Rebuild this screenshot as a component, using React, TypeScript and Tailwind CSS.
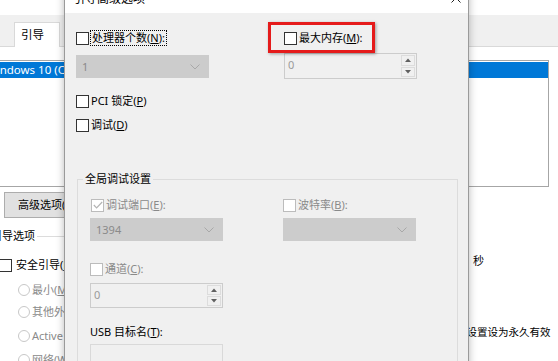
import React from "react";

function U({ children }: { children: React.ReactNode }) {
  return <span className="underline underline-offset-[1px]">{children}</span>;
}

function CheckBox({ checked = false, disabled = false }: { checked?: boolean; disabled?: boolean }) {
  return (
    <span
      className={
        disabled
          ? "inline-flex h-[13px] w-[13px] shrink-0 items-center justify-center border border-[#bcbcbc] bg-white"
          : "inline-flex h-[13px] w-[13px] shrink-0 items-center justify-center border border-[#333333] bg-white"
      }
    >
      {checked && (
        <svg width="10" height="8" viewBox="0 0 10 8">
          <path d="M0.8 4 L3.6 6.8 L9.2 1" fill="none" stroke={disabled ? "#b4b4b4" : "#222"} strokeWidth="1.2" />
        </svg>
      )}
    </span>
  );
}

function Radio() {
  return <span className="inline-block h-[12px] w-[12px] shrink-0 rounded-full border border-[#c8c8c8] bg-white" />;
}

function Chevron() {
  return (
    <svg width="10" height="6" viewBox="0 0 10 6">
      <path d="M0.5 0.5 L5 5 L9.5 0.5" fill="none" stroke="#a8a8a8" strokeWidth="1" />
    </svg>
  );
}

function Combo({ value }: { value: string }) {
  return (
    <div className="flex h-[23px] w-[133px] items-center justify-between border border-[#cccccc] bg-[#cccccc] pl-[5px] pr-[8px] text-[#8a8a8a]">
      <span>{value}</span>
      <Chevron />
    </div>
  );
}

function Spin({ h26 = false }: { h26?: boolean }) {
  return (
    <div
      className={
        h26
          ? "flex h-[26px] w-[133px] border border-[#cccccc] bg-[#f0f0f0]"
          : "flex h-[25px] w-[133px] border border-[#cccccc] bg-[#f0f0f0]"
      }
    >
      <span className="flex-1 pl-[3px] pt-[3px] text-[#9a9a9a]">0</span>
      <div className="flex w-[16px] flex-col gap-[1px] p-[1px]">
        <div className="flex flex-1 items-center justify-center border border-[#dcdcdc] bg-[#f0f0f0]">
          <svg width="6" height="4" viewBox="0 0 6 4">
            <path d="M0 4 L3 0.5 L6 4 Z" fill="#606060" />
          </svg>
        </div>
        <div className="flex flex-1 items-center justify-center border border-[#dcdcdc] bg-[#f0f0f0]">
          <svg width="6" height="4" viewBox="0 0 6 4">
            <path d="M0 0 L3 3.5 L6 0 Z" fill="#606060" />
          </svg>
        </div>
      </div>
    </div>
  );
}

function BackgroundWindow() {
  return (
    <div className="absolute left-[-20px] top-0 w-[620px] bg-white">
      <div className="h-[15px] bg-white" />
      <div className="flex h-[32px] items-end border-b border-[#d9d9d9] bg-[#f0f0f0] pl-[34px]">
        <div className="-mb-px flex h-[25px] w-[46px] items-center border border-b-0 border-[#d9d9d9] bg-white pl-[6px] text-[11.5px]">
          引导
        </div>
      </div>
      <div className="pl-[3px] pt-[13px]">
        <div className="h-[127px] w-[566px] border border-[#a6a6a6] pt-px">
          <div className="flex h-[16px] items-center bg-[#0078d7] pl-[2px] text-[11.5px] text-white whitespace-nowrap font-['Noto_Sans','Noto_Sans_CJK_SC',sans-serif]">
            Windows 10 (C:\WINDOWS)：当前 OS; 默认 OS
          </div>
        </div>
      </div>
      <div className="flex">
        <div className="w-[420px] shrink-0">
          <div className="ml-[24px] mt-[5px] flex h-[26px] w-[110px] items-center border border-[#adadad] bg-[#e1e1e1] pl-[13px]">
            高级选项(<U>V</U>)...
          </div>
          <fieldset className="ml-[7px] mt-[10px] w-[380px] border border-[#dcdcdc] pb-[20px]">
            <legend className="ml-[1px] px-[2px] leading-[16px]">引导选项</legend>
            <div className="pl-[11px]">
              <div className="mt-[13px] flex h-[16px] items-center">
                <CheckBox />
                <span className="ml-[4px]">安全引导(<U>F</U>)</span>
              </div>
              <div className="ml-[19px] mt-[9px] flex h-[16px] items-center text-[#8a8a8a]">
                <Radio />
                <span className="ml-[2px]">最小(<U>M</U>)</span>
              </div>
              <div className="ml-[19px] mt-[6px] flex h-[16px] items-center text-[#8a8a8a]">
                <Radio />
                <span className="ml-[2px]">其他外壳(<U>L</U>)</span>
              </div>
              <div className="ml-[19px] mt-[8px] flex h-[16px] items-center text-[#8a8a8a]">
                <Radio />
                <span className="ml-[2px]">Active Directory 修复(<U>P</U>)</span>
              </div>
              <div className="ml-[19px] mt-[8px] flex h-[16px] items-center text-[#8a8a8a]">
                <Radio />
                <span className="ml-[2px]">网络(<U>W</U>)</span>
              </div>
            </div>
          </fieldset>
        </div>
        <div className="flex-1">
          <div className="mt-[66px] flex h-[16px] items-center pl-[73px]">秒</div>
          <div className="mt-[55px] flex h-[16px] items-center whitespace-nowrap pl-[14px] text-[10.5px]">
            使所有引导设置设为永久有效
          </div>
        </div>
      </div>
    </div>
  );
}

function Dialog() {
  return (
    <div className="absolute left-[64px] top-[-18px] h-[400px] w-[405px] border-x border-[#9a9a9a] bg-[#f0f0f0] shadow-[0_0_8px_rgba(0,0,0,0.28)]">
      <div className="flex h-[31px] items-start justify-between bg-white pl-[8px] pr-[7px]">
        <span className="mt-[9px] text-[12px] leading-[16px]">引导高级选项</span>
        <svg className="mt-[11px]" width="10" height="10" viewBox="0 0 10 10">
          <path d="M0.5 0.5 L9.5 9.5 M9.5 0.5 L0.5 9.5" stroke="#222" strokeWidth="1" />
        </svg>
      </div>
      <div className="pl-[11px]">
        <div className="grid grid-cols-[208px_1fr] pt-[17px]">
          <div className="flex h-[16px] items-center">
            <CheckBox />
            <span className="ml-px border border-dotted border-black px-px leading-[14px]">
              处理器个数(<U>N</U>):
            </span>
          </div>
          <div className="relative flex h-[16px] items-center">
            <CheckBox />
            <span className="ml-[2px]">
              最大内存(<U>M</U>):
            </span>
            <div className="absolute left-[-16px] top-[-8px] h-[31px] w-[107px] border-[3px] border-[#e51b1b] shadow-[1px_1px_3px_rgba(0,0,0,0.35)]" />
          </div>
          <div className="mt-[9px]">
            <Combo value="1" />
          </div>
          <div className="mt-[7px]">
            <Spin h26 />
          </div>
        </div>
        <div className="mt-[14px] flex h-[16px] items-center">
          <CheckBox />
          <span className="ml-[2px]">
            PCI 锁定(<U>P</U>)
          </span>
        </div>
        <div className="mt-[8px] flex h-[16px] items-center">
          <CheckBox />
          <span className="ml-[2px]">
            调试(<U>D</U>)
          </span>
        </div>
        <fieldset className="ml-px mt-[38px] w-[381px] border border-[#dcdcdc] pb-[30px]">
          <legend className="ml-[5px] px-[2px] leading-[16px]">全局调试设置</legend>
          <div className="pl-[12px]">
            <div className="mt-[10px] grid grid-cols-[193px_1fr]">
              <div className="flex h-[16px] items-center text-[#8a8a8a]">
                <span className="ml-px">
                  <CheckBox checked disabled />
                </span>
                <span className="ml-[2px]">
                  调试端口(<U>E</U>):
                </span>
              </div>
              <div className="flex h-[16px] items-center text-[#8a8a8a]">
                <CheckBox disabled />
                <span className="ml-[2px]">
                  波特率(<U>B</U>):
                </span>
              </div>
              <div className="mt-[5px]">
                <Combo value="1394" />
              </div>
              <div className="mt-[5px]">
                <Combo value="" />
              </div>
            </div>
            <div className="mt-[20px] flex h-[16px] items-center text-[#8a8a8a]">
              <CheckBox disabled />
              <span className="ml-[2px]">
                通道(<U>C</U>):
              </span>
            </div>
            <div className="mt-[6px]">
              <Spin />
            </div>
            <div className="mt-[16px] flex h-[16px] items-center">
              USB 目标名(<U>T</U>):
            </div>
            <div className="mt-[4px] h-[23px] w-[133px] border border-[#d9d9d9] bg-[#f0f0f0]" />
          </div>
        </fieldset>
      </div>
    </div>
  );
}

export default function App() {
  return (
    <div className="relative h-[361px] w-[558px] overflow-hidden bg-white text-[11px] leading-[16px] text-black font-['Noto_Sans','Noto_Sans_CJK_SC',sans-serif]">
      <BackgroundWindow />
      <Dialog />
    </div>
  );
}
